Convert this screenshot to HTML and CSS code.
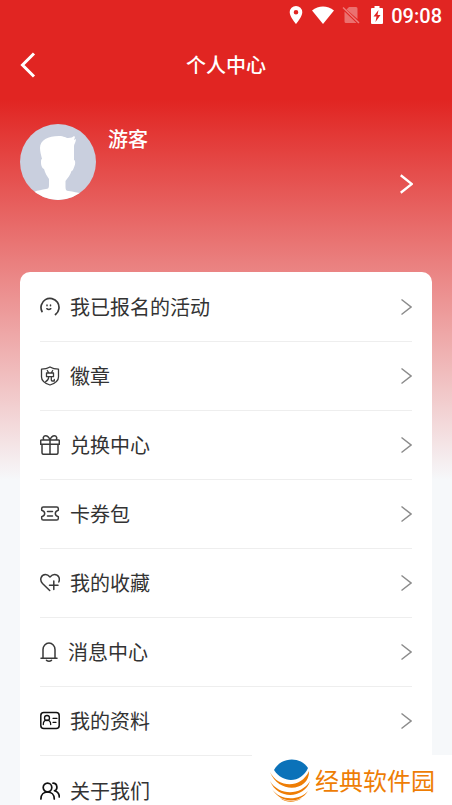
FILE: index.html
```html
<!DOCTYPE html>
<html lang="zh-CN">
<head>
<meta charset="utf-8">
<meta name="viewport" content="width=device-width, initial-scale=1">
<title>个人中心</title>
<link rel="stylesheet" href="styles.css">
</head>
<body>
<svg class="defs" aria-hidden="true">
  <symbol id="chevron" viewBox="0 0 12 18"><path d="M1.500 1.500 11 9 1.500 16.500"/></symbol>
</svg>
<div class="screen">
  <div class="status">
    <svg width="14" height="20" viewBox="0 0 14 20"><path fill="#fff" fill-rule="evenodd" d="M7 1a6.300 6.300 0 0 0-6.300 6.300C.7 12 7 19 7 19s6.300-7 6.300-11.700A6.300 6.300 0 0 0 7 1Zm0 4a2.300 2.300 0 1 1 0 4.600A2.300 2.300 0 0 1 7 5Z"/></svg>
    <svg class="wifi" width="22" height="18" viewBox="0 0 22 18"><path fill="#fff" d="M0 4.500C6.500-.7 15.500-.7 22 4.500L11 18Z"/></svg>
    <svg class="sim" width="18" height="18" viewBox="0 0 18 18"><path fill="#fff" fill-opacity=".35" d="M7 1h7q1.500 0 1.500 1.500V13L4.500 3.500ZM2.500 5.500 14.500 17H4q-1.500 0-1.500-1.500Z"/><path stroke="#fff" stroke-opacity=".4" stroke-width="1.500" d="m1 1.500 16 15.500"/></svg>
    <svg class="battery" width="12" height="18" viewBox="0 0 12 18"><path fill="#fff" d="M3.500 0h5v2H11q1 0 1 1v14q0 1-1 1H1q-1 0-1-1V3q0-1 1-1h2.500Z"/><path fill="#e12522" d="M7.500 4 2.500 10.500h3L4.500 16l5-7h-3Z"/></svg>
    <time>09:08</time>
  </div>
  <header class="bar">
    <button class="back" type="button" aria-label="返回"><svg width="16" height="26" viewBox="0 0 16 26"><path d="M14 1.500 2.500 13 14 24.500"/></svg></button>
    <h1>个人中心</h1>
  </header>
  <a class="profile" href="#profile">
    <svg class="avatar" width="76" height="76" viewBox="0 0 76 76">
      <clipPath id="round"><circle cx="38" cy="38" r="38"/></clipPath>
      <g clip-path="url(#round)"><path fill="#c9cfde" d="M0 0h76v76H0z"/><path fill="#fff" d="M20 24C20 16 28 12 39 12c5 0 7 2 9 2 3 0 5-1 6-2l1 1-1 3 2-1c0 3-2 5-2 7v14c1.500 0 1.500 4 .5 6-1 3-2 5-3 5-1 4-4 7-6 10v6c0 3 1 4 3 4 5 1 9 1 13 3v11H14V68c4-2 8-2 12-3 2 0 3-1 3-4v-6c-2-3-4-6-5-10-1 0-3-3-3-6s0-4 1-4c-1-4-2-8-2-11Z"/></g>
    </svg>
    <span class="name">游客</span>
    <svg class="go" width="14" height="22"><use href="#chevron"/></svg>
  </a>
  <nav class="menu">
    <a href="#events"><svg class="icon" viewBox="0 0 20 20"><path stroke-width="1.700" d="M2 14.500A9 9 0 1 1 15.500 17.500"/><path stroke-width="1.500" d="M7 8v.8M10.500 8v.8M6.800 11.700q2 1.600 4 0"/></svg><span>我已报名的活动</span><svg class="arrow"><use href="#chevron"/></svg></a>
    <a href="#badges"><svg class="icon" viewBox="0 0 20 20"><path stroke-width="1.300" d="M10 1Q13.500 3.200 18.500 3.200V11c0 4-4 6.500-8.500 8C5.500 17.500 1.500 15 1.500 11V3.200Q6.500 3.200 10 1Z"/><path stroke-width="1.300" d="m7.300 4.500 1.200 2m4.200-2-1.200 2M6.500 7h7v3.700h-7Zm2.200 3.700c0 2.800-1 4-3 5m5.600-5V14q0 1 1 1h2v-1.500"/></svg><span>徽章</span><svg class="arrow"><use href="#chevron"/></svg></a>
    <a href="#exchange"><svg class="icon" viewBox="0 0 20 20"><path d="M1.500 5h17q.8 0 .8.800V9.300H.7V5.800Q.7 5 1.500 5ZM2 9.300h16v8.500q0 1.500-1.500 1.500h-13Q2 19.300 2 17.800ZM10 5v14.300M10 5C9 2 7.500.8 5.500.8S2.500 3 4 5M10 5c1-3 2.500-4.200 4.500-4.200S17.500 3 16 5"/></svg><span>兑换中心</span><svg class="arrow"><use href="#chevron"/></svg></a>
    <a href="#coupons"><svg class="icon" viewBox="0 0 20 20"><path d="M3.300 3h13.400q1.600 0 1.600 1.600v1.600c-4 1.300-4 5.300 0 6.600v1.600q0 1.600-1.600 1.600H3.300q-1.600 0-1.600-1.600v-1.600c4-1.300 4-5.300 0-6.600V4.600Q1.700 3 3.300 3ZM7.500 7.500h5M7.500 12h5"/></svg><span>卡券包</span><svg class="arrow"><use href="#chevron"/></svg></a>
    <a href="#favourites"><svg class="icon" viewBox="0 0 20 20"><path d="M9.700 17.500 2.500 10.500C-.8 7 1 1.500 5.500 1.500c1.800 0 3 .8 4.500 2.500 1.500-1.700 2.700-2.500 4.500-2.500 4 0 5.800 4 4.300 7.500M13.800 8v8.500M9.500 12.200h8.500"/></svg><span>我的收藏</span><svg class="arrow"><use href="#chevron"/></svg></a>
    <a href="#messages"><svg class="icon narrow" viewBox="0 0 18 20"><path d="M3 16.300V7.500a6 6.500 0 0 1 12 0v8.800M1 16.300h16M6.500 18.300q2.500 1.800 5 0"/></svg><span>消息中心</span><svg class="arrow"><use href="#chevron"/></svg></a>
    <a href="#details"><svg class="icon dark" viewBox="0 0 20 20"><rect x=".8" y="1.500" width="18.400" height="16" rx="3"/><path stroke-width="1.300" d="M3.300 13.500c0-3 1.700-4.300 3.700-4.300s3.700 1.300 3.700 4.300M13 7.300h4M13 11.300h3"/><circle stroke-width="1.300" cx="7" cy="7" r="2.500"/></svg><span>我的资料</span><svg class="arrow"><use href="#chevron"/></svg></a>
    <a href="#about"><svg class="icon dark" viewBox="0 0 20 20"><g stroke-width="1.700"><circle cx="7.500" cy="6.500" r="4.300"/><path d="M.9 18c0-4.500 2.800-7 6.600-7s6.800 2.500 6.800 7M13 2.200c4.700 0 5 6.500 1.500 7.500 3.200 1 4.800 3 4.800 6.300"/></g></svg><span>关于我们</span><svg class="arrow"><use href="#chevron"/></svg></a>
  </nav>
</div>
<div class="brand">
  <svg width="42" height="44" viewBox="0 0 42 44"><path fill="#0b72b9" d="M4 12C11-1 30-2 38 10 32 24 14 27 4 12Z"/><g fill="#ee7d05"><path d="M0 14c8 16 31 17 39-1 1 20-30 24-39 1Z"/><path d="M0 23c9 15 31 15 40 0-5 17-32 20-40 0Z"/><path d="M2 31c8 12 27 12 36 2-8 13-27 13-36-2Z"/><path d="M10 40c7 4 15 4 22 0-7 5-16 5-22 0Z"/></g></svg>
  <span>经典软件园</span>
</div>
</body>
</html>
```
FILE: styles.css
```css
* {
  box-sizing: border-box;
}

body {
  margin: 0;
  background: #f6f7f9;
  color: #333;
  font-family: "Noto Sans CJK SC", sans-serif;
  font-size: 20px;
  line-height: 30px;
}

svg {
  display: block;
  flex: none;
  fill: none;
}

a {
  color: inherit;
  text-decoration: none;
}

.defs {
  position: absolute;
  width: 0;
  height: 0;
}

.screen {
  height: 100vh;
  overflow-y: auto;
  scrollbar-width: none;
  background: linear-gradient(#e12522 100px, #f6f8fa 480px);
}

.status {
  display: flex;
  align-items: center;
  justify-content: flex-end;
  height: 30px;
  padding-right: 10px;
  color: #fff;
  font-family: Roboto, sans-serif;
  font-weight: 500;
}

.wifi {
  margin-left: 9px;
}

.sim {
  margin-left: 8px;
}

.battery {
  margin-left: 11px;
}

.status time {
  margin-left: 8px;
  padding-top: 2px;
}

.bar {
  display: grid;
  grid-template-columns: 40px 1fr 40px;
  align-items: center;
  height: 70px;
  padding: 0 20px;
  color: #fff;
}

.bar h1 {
  margin: 0;
  font-size: 20px;
  font-weight: 500;
  text-align: center;
}

.back {
  padding: 0;
  border: 0;
  background: none;
  stroke: #fff;
  stroke-width: 3;
}

.profile {
  display: flex;
  align-items: flex-start;
  gap: 12px;
  height: 172px;
  padding: 24px 39px 0 20px;
  color: #fff;
  font-weight: 500;
}

.name {
  flex: 1;
}

.go {
  margin-top: 49px;
  stroke: #fff;
  stroke-width: 2;
}

.menu {
  margin: 0 20px 20px;
  padding: 1px 20px 0;
  border-radius: 10px;
  background: #fff;
}

.menu a {
  display: flex;
  align-items: center;
  gap: 10px;
  height: 69px;
  border-bottom: 1px solid #eee;
}

.menu a:last-child {
  border-bottom: 0;
}

.menu span {
  flex: 1;
}

.icon {
  width: 20px;
  height: 20px;
  stroke: #3a3a3a;
  stroke-width: 1.5;
  stroke-linecap: round;
  stroke-linejoin: round;
}

.narrow {
  width: 18px;
}

.dark {
  stroke: #111;
}

.arrow {
  width: 12px;
  height: 18px;
  stroke: #8c8c8c;
  stroke-width: 1.5;
}

.brand {
  position: fixed;
  right: 0;
  bottom: 0;
  display: flex;
  align-items: center;
  gap: 3px;
  height: 50px;
  padding: 0 17px 0 18px;
  background: #fff;
  color: #ee7d05;
  font-size: 24px;
}
```
